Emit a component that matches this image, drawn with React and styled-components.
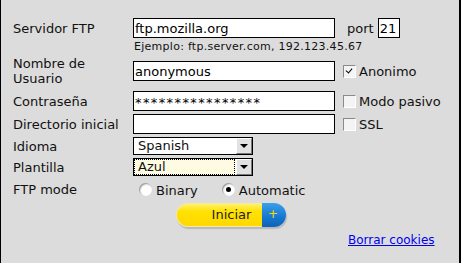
import React from 'react';
import styled, { createGlobalStyle, css } from 'styled-components';

const Global = createGlobalStyle`
  html, body { margin: 0; padding: 0; background: #dcdcdc; }
  body { font-family: Verdana, "DejaVu Sans", sans-serif; }
`;

export default function App() {
  return (
    <>
      <Global />
      <Frame>
        <Row>
          <Label>Servidor FTP</Label>
          <TextBox defaultValue="ftp.mozilla.org" />
          <Side>
            <PortLabel>port</PortLabel>
            <PortBox defaultValue="21" />
          </Side>
        </Row>
        <Hint>Ejemplo: ftp.server.com, 192.123.45.67</Hint>
        <Row tall>
          <Label>Nombre de<br />Usuario</Label>
          <TextBox defaultValue="anonymous" />
          <Side>
            <Check checked />
            <CheckText>Anonimo</CheckText>
          </Side>
        </Row>
        <Row gap={4}>
          <Label>Contraseña</Label>
          <TextBox masked defaultValue="****************" />
          <Side>
            <Check />
            <CheckText>Modo pasivo</CheckText>
          </Side>
        </Row>
        <Row gap={3}>
          <Label>Directorio inicial</Label>
          <TextBox defaultValue="" />
          <Side>
            <Check />
            <CheckText>SSL</CheckText>
          </Side>
        </Row>
        <Row gap={3} short>
          <Label>Idioma</Label>
          <Select>
            <SelectValue>Spanish</SelectValue>
            <Arrow />
          </Select>
        </Row>
        <Row gap={3} short>
          <Label>Plantilla</Label>
          <Select focused>
            <SelectValue focused>Azul</SelectValue>
            <Arrow />
          </Select>
        </Row>
        <Row gap={4} short>
          <Label>FTP mode</Label>
          <Radios>
            <RadioItem>
              <Radio />
              <RadioText>Binary</RadioText>
            </RadioItem>
            <RadioItem>
              <Radio checked />
              <RadioText>Automatic</RadioText>
            </RadioItem>
          </Radios>
        </Row>
        <ButtonRow>
          <StartButton>
            <StartLabel>Iniciar</StartLabel>
            <PlusCap>+</PlusCap>
          </StartButton>
        </ButtonRow>
        <LinkRow>
          <CookieLink href="#">Borrar cookies</CookieLink>
        </LinkRow>
      </Frame>
    </>
  );
}

const Frame = styled.div`
  box-sizing: border-box;
  width: 461px;
  height: 263px;
  background: #dcdcdc;
  border-left: 1px solid #000;
  border-right: 2px solid #000;
  padding: 18px 0 0 12px;
  display: flex;
  flex-direction: column;
  color: #111;
  font-size: 13px;
`;

const Row = styled.div`
  display: grid;
  grid-template-columns: 120px 211px auto;
  align-items: center;
  height: 20px;
  margin-top: ${(p) => (p.gap ?? 0)}px;
  ${(p) => p.tall && css`
    height: 32px;
    margin-top: 2px;
  `}
  ${(p) => p.short && css`
    height: 18px;
  `}
`;

const Label = styled.div`
  line-height: 15px;
`;

const TextBox = styled.input`
  box-sizing: border-box;
  width: 202px;
  height: 20px;
  margin: 0;
  padding: 0 1px;
  border: 1px solid #000;
  background: #fff;
  font: 13px Verdana, "DejaVu Sans", sans-serif;
  color: #000;
  outline: none;
  ${(p) => p.masked && css`
    letter-spacing: 1.4px;
    padding-top: 3px;
  `}
`;

const Side = styled.div`
  display: flex;
  align-items: center;
`;

const PortLabel = styled.span`
  margin-left: 3px;
  margin-right: 4px;
`;

const PortBox = styled(TextBox)`
  width: 22px;
`;

const Hint = styled.div`
  margin: 2px 0 0 121px;
  height: 13px;
  line-height: 13px;
  font-size: 11px;
  letter-spacing: 0.27px;
`;

const Check = styled.span`
  box-sizing: border-box;
  width: 13px;
  height: 13px;
  margin-left: -1px;
  background: #f4f4f4;
  border-top: 1px solid #8a8a8a;
  border-left: 1px solid #8a8a8a;
  border-right: 1px solid #fff;
  border-bottom: 1px solid #fff;
  position: relative;
  ${(p) => p.checked && css`
    &::after {
      content: '';
      position: absolute;
      left: 3px;
      top: 1px;
      width: 3px;
      height: 5px;
      border-right: 1.5px solid #000;
      border-bottom: 1.5px solid #000;
      transform: rotate(40deg);
    }
  `}
`;

const CheckText = styled.span`
  margin-left: 3px;
`;

const Select = styled.div`
  box-sizing: border-box;
  width: 120px;
  height: 18px;
  border: 1px solid #000;
  background: ${(p) => (p.focused ? '#fffbe2' : '#fff')};
  display: flex;
  align-items: stretch;
`;

const SelectValue = styled.div`
  flex: 1;
  padding-left: 4px;
  line-height: 15px;
  ${(p) => p.focused && css`
    margin: 0 1px 0 0;
    border: 1px dotted #000;
    padding-left: 3px;
    line-height: 14px;
  `}
`;

const Arrow = styled.div`
  width: 16px;
  box-sizing: border-box;
  background: #e2e2e2;
  border-left: 1px solid #fff;
  border-top: 1px solid #fff;
  border-right: 1px solid #777;
  border-bottom: 1px solid #777;
  display: flex;
  align-items: center;
  justify-content: center;
  &::after {
    content: '';
    border-left: 4px solid transparent;
    border-right: 4px solid transparent;
    border-top: 4px solid #000;
  }
`;

const Radios = styled.div`
  display: flex;
  padding-left: 6px;
  gap: 24px;
  grid-column: 2 / 4;
`;

const RadioItem = styled.div`
  display: flex;
  align-items: center;
`;

const Radio = styled.span`
  box-sizing: border-box;
  width: 13px;
  height: 13px;
  border-radius: 50%;
  background: radial-gradient(circle at 60% 60%, #fff 40%, #d8d8d8 90%);
  box-shadow: inset 1px 1px 1px #9a9a9a;
  display: flex;
  align-items: center;
  justify-content: center;
  ${(p) => p.checked && css`
    &::after {
      content: '';
      width: 5px;
      height: 5px;
      border-radius: 50%;
      background: #000;
    }
  `}
`;

const RadioText = styled.span`
  margin-left: 4px;
  padding-top: 2px;
`;

const ButtonRow = styled.div`
  margin-top: 5px;
  padding-left: 163px;
  display: flex;
`;

const StartButton = styled.div`
  position: relative;
  display: flex;
  width: 110px;
  height: 24px;
  border-radius: 12px;
  box-shadow: 1px 2px 1px #b8b8b8;
`;

const StartLabel = styled.div`
  flex: 1;
  border-radius: 12px 0 0 12px;
  background: linear-gradient(#fff06a 0%, #ffe100 35%, #ffd800 100%);
  border: 1px solid #f5e8a0;
  border-right: none;
  text-align: center;
  line-height: 22px;
  padding-left: 24px;
  color: #222;
`;

const PlusCap = styled.div`
  width: 22px;
  border-radius: 0 12px 12px 0;
  background: linear-gradient(#3aa0ec 0%, #1577cf 60%, #0f63b6 100%);
  color: #ffd800;
  text-align: center;
  line-height: 22px;
  font-size: 12px;
  padding-right: 2px;
`;

const LinkRow = styled.div`
  margin-top: 5px;
  padding-left: 335px;
`;

const CookieLink = styled.a`
  font-size: 12px;
  color: #0000ee;
  text-decoration: underline;
`;
